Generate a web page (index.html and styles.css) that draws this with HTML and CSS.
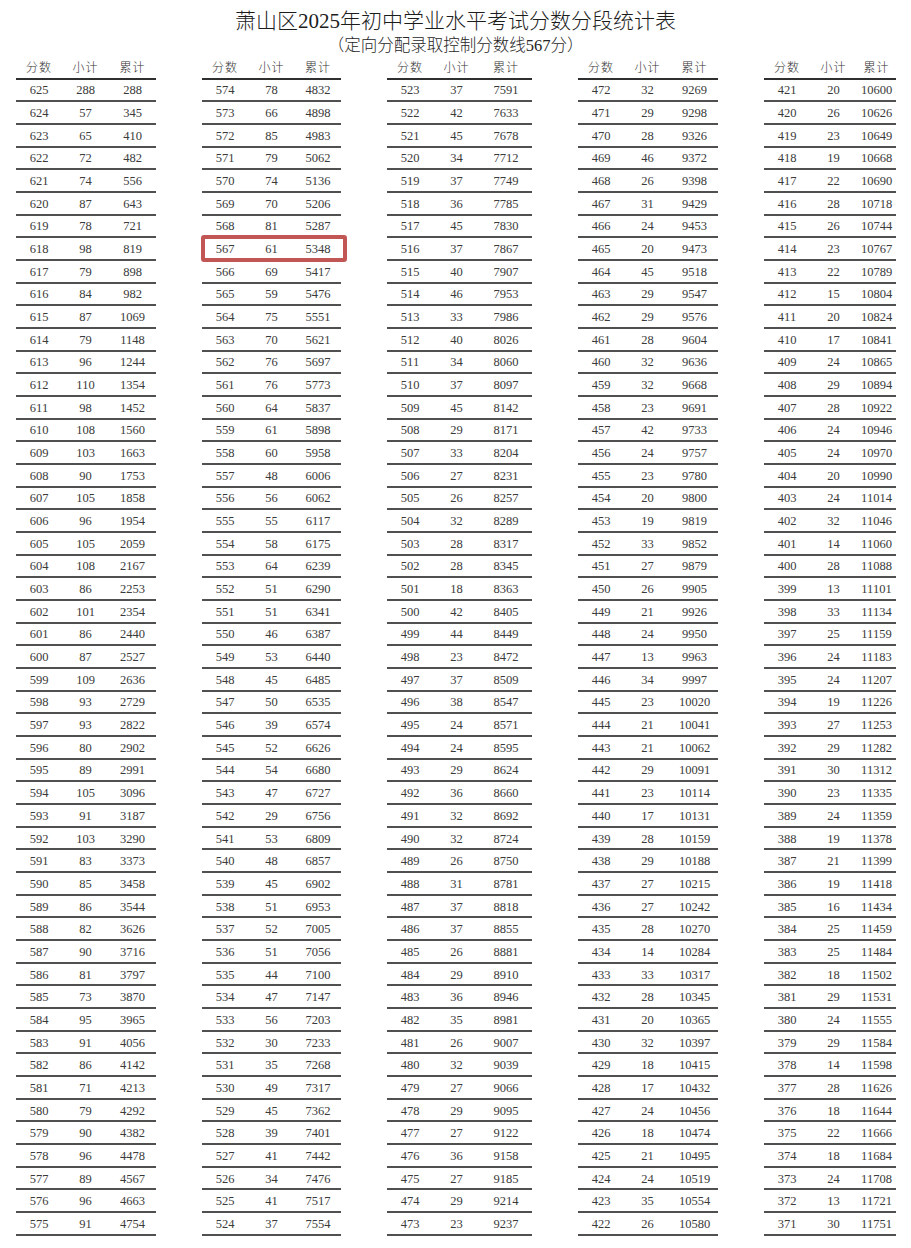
FILE: index.html
```html
<!DOCTYPE html>
<html lang="zh-CN">
<head>
<meta charset="utf-8">
<title>萧山区2025年初中学业水平考试分数分段统计表</title>
<link rel="stylesheet" href="styles.css">
</head>
<body>
<header class="head">
<h1 class="title">萧山区2025年初中学业水平考试分数分段统计表</h1>
<p class="sub">（定向分配录取控制分数线567分）</p>
</header>
<main class="cols">
<section class="tbl">
<div class="row hd"><span>分数</span><span>小计</span><span>累计</span></div>
<div class="row"><span>625</span><span>288</span><span>288</span></div>
<div class="row"><span>624</span><span>57</span><span>345</span></div>
<div class="row"><span>623</span><span>65</span><span>410</span></div>
<div class="row"><span>622</span><span>72</span><span>482</span></div>
<div class="row"><span>621</span><span>74</span><span>556</span></div>
<div class="row"><span>620</span><span>87</span><span>643</span></div>
<div class="row"><span>619</span><span>78</span><span>721</span></div>
<div class="row"><span>618</span><span>98</span><span>819</span></div>
<div class="row"><span>617</span><span>79</span><span>898</span></div>
<div class="row"><span>616</span><span>84</span><span>982</span></div>
<div class="row"><span>615</span><span>87</span><span>1069</span></div>
<div class="row"><span>614</span><span>79</span><span>1148</span></div>
<div class="row"><span>613</span><span>96</span><span>1244</span></div>
<div class="row"><span>612</span><span>110</span><span>1354</span></div>
<div class="row"><span>611</span><span>98</span><span>1452</span></div>
<div class="row"><span>610</span><span>108</span><span>1560</span></div>
<div class="row"><span>609</span><span>103</span><span>1663</span></div>
<div class="row"><span>608</span><span>90</span><span>1753</span></div>
<div class="row"><span>607</span><span>105</span><span>1858</span></div>
<div class="row"><span>606</span><span>96</span><span>1954</span></div>
<div class="row"><span>605</span><span>105</span><span>2059</span></div>
<div class="row"><span>604</span><span>108</span><span>2167</span></div>
<div class="row"><span>603</span><span>86</span><span>2253</span></div>
<div class="row"><span>602</span><span>101</span><span>2354</span></div>
<div class="row"><span>601</span><span>86</span><span>2440</span></div>
<div class="row"><span>600</span><span>87</span><span>2527</span></div>
<div class="row"><span>599</span><span>109</span><span>2636</span></div>
<div class="row"><span>598</span><span>93</span><span>2729</span></div>
<div class="row"><span>597</span><span>93</span><span>2822</span></div>
<div class="row"><span>596</span><span>80</span><span>2902</span></div>
<div class="row"><span>595</span><span>89</span><span>2991</span></div>
<div class="row"><span>594</span><span>105</span><span>3096</span></div>
<div class="row"><span>593</span><span>91</span><span>3187</span></div>
<div class="row"><span>592</span><span>103</span><span>3290</span></div>
<div class="row"><span>591</span><span>83</span><span>3373</span></div>
<div class="row"><span>590</span><span>85</span><span>3458</span></div>
<div class="row"><span>589</span><span>86</span><span>3544</span></div>
<div class="row"><span>588</span><span>82</span><span>3626</span></div>
<div class="row"><span>587</span><span>90</span><span>3716</span></div>
<div class="row"><span>586</span><span>81</span><span>3797</span></div>
<div class="row"><span>585</span><span>73</span><span>3870</span></div>
<div class="row"><span>584</span><span>95</span><span>3965</span></div>
<div class="row"><span>583</span><span>91</span><span>4056</span></div>
<div class="row"><span>582</span><span>86</span><span>4142</span></div>
<div class="row"><span>581</span><span>71</span><span>4213</span></div>
<div class="row"><span>580</span><span>79</span><span>4292</span></div>
<div class="row"><span>579</span><span>90</span><span>4382</span></div>
<div class="row"><span>578</span><span>96</span><span>4478</span></div>
<div class="row"><span>577</span><span>89</span><span>4567</span></div>
<div class="row"><span>576</span><span>96</span><span>4663</span></div>
<div class="row"><span>575</span><span>91</span><span>4754</span></div>
</section>
<section class="tbl">
<div class="row hd"><span>分数</span><span>小计</span><span>累计</span></div>
<div class="row"><span>574</span><span>78</span><span>4832</span></div>
<div class="row"><span>573</span><span>66</span><span>4898</span></div>
<div class="row"><span>572</span><span>85</span><span>4983</span></div>
<div class="row"><span>571</span><span>79</span><span>5062</span></div>
<div class="row"><span>570</span><span>74</span><span>5136</span></div>
<div class="row"><span>569</span><span>70</span><span>5206</span></div>
<div class="row"><span>568</span><span>81</span><span>5287</span></div>
<div class="row hl"><span>567</span><span>61</span><span>5348</span></div>
<div class="row"><span>566</span><span>69</span><span>5417</span></div>
<div class="row"><span>565</span><span>59</span><span>5476</span></div>
<div class="row"><span>564</span><span>75</span><span>5551</span></div>
<div class="row"><span>563</span><span>70</span><span>5621</span></div>
<div class="row"><span>562</span><span>76</span><span>5697</span></div>
<div class="row"><span>561</span><span>76</span><span>5773</span></div>
<div class="row"><span>560</span><span>64</span><span>5837</span></div>
<div class="row"><span>559</span><span>61</span><span>5898</span></div>
<div class="row"><span>558</span><span>60</span><span>5958</span></div>
<div class="row"><span>557</span><span>48</span><span>6006</span></div>
<div class="row"><span>556</span><span>56</span><span>6062</span></div>
<div class="row"><span>555</span><span>55</span><span>6117</span></div>
<div class="row"><span>554</span><span>58</span><span>6175</span></div>
<div class="row"><span>553</span><span>64</span><span>6239</span></div>
<div class="row"><span>552</span><span>51</span><span>6290</span></div>
<div class="row"><span>551</span><span>51</span><span>6341</span></div>
<div class="row"><span>550</span><span>46</span><span>6387</span></div>
<div class="row"><span>549</span><span>53</span><span>6440</span></div>
<div class="row"><span>548</span><span>45</span><span>6485</span></div>
<div class="row"><span>547</span><span>50</span><span>6535</span></div>
<div class="row"><span>546</span><span>39</span><span>6574</span></div>
<div class="row"><span>545</span><span>52</span><span>6626</span></div>
<div class="row"><span>544</span><span>54</span><span>6680</span></div>
<div class="row"><span>543</span><span>47</span><span>6727</span></div>
<div class="row"><span>542</span><span>29</span><span>6756</span></div>
<div class="row"><span>541</span><span>53</span><span>6809</span></div>
<div class="row"><span>540</span><span>48</span><span>6857</span></div>
<div class="row"><span>539</span><span>45</span><span>6902</span></div>
<div class="row"><span>538</span><span>51</span><span>6953</span></div>
<div class="row"><span>537</span><span>52</span><span>7005</span></div>
<div class="row"><span>536</span><span>51</span><span>7056</span></div>
<div class="row"><span>535</span><span>44</span><span>7100</span></div>
<div class="row"><span>534</span><span>47</span><span>7147</span></div>
<div class="row"><span>533</span><span>56</span><span>7203</span></div>
<div class="row"><span>532</span><span>30</span><span>7233</span></div>
<div class="row"><span>531</span><span>35</span><span>7268</span></div>
<div class="row"><span>530</span><span>49</span><span>7317</span></div>
<div class="row"><span>529</span><span>45</span><span>7362</span></div>
<div class="row"><span>528</span><span>39</span><span>7401</span></div>
<div class="row"><span>527</span><span>41</span><span>7442</span></div>
<div class="row"><span>526</span><span>34</span><span>7476</span></div>
<div class="row"><span>525</span><span>41</span><span>7517</span></div>
<div class="row"><span>524</span><span>37</span><span>7554</span></div>
</section>
<section class="tbl">
<div class="row hd"><span>分数</span><span>小计</span><span>累计</span></div>
<div class="row"><span>523</span><span>37</span><span>7591</span></div>
<div class="row"><span>522</span><span>42</span><span>7633</span></div>
<div class="row"><span>521</span><span>45</span><span>7678</span></div>
<div class="row"><span>520</span><span>34</span><span>7712</span></div>
<div class="row"><span>519</span><span>37</span><span>7749</span></div>
<div class="row"><span>518</span><span>36</span><span>7785</span></div>
<div class="row"><span>517</span><span>45</span><span>7830</span></div>
<div class="row"><span>516</span><span>37</span><span>7867</span></div>
<div class="row"><span>515</span><span>40</span><span>7907</span></div>
<div class="row"><span>514</span><span>46</span><span>7953</span></div>
<div class="row"><span>513</span><span>33</span><span>7986</span></div>
<div class="row"><span>512</span><span>40</span><span>8026</span></div>
<div class="row"><span>511</span><span>34</span><span>8060</span></div>
<div class="row"><span>510</span><span>37</span><span>8097</span></div>
<div class="row"><span>509</span><span>45</span><span>8142</span></div>
<div class="row"><span>508</span><span>29</span><span>8171</span></div>
<div class="row"><span>507</span><span>33</span><span>8204</span></div>
<div class="row"><span>506</span><span>27</span><span>8231</span></div>
<div class="row"><span>505</span><span>26</span><span>8257</span></div>
<div class="row"><span>504</span><span>32</span><span>8289</span></div>
<div class="row"><span>503</span><span>28</span><span>8317</span></div>
<div class="row"><span>502</span><span>28</span><span>8345</span></div>
<div class="row"><span>501</span><span>18</span><span>8363</span></div>
<div class="row"><span>500</span><span>42</span><span>8405</span></div>
<div class="row"><span>499</span><span>44</span><span>8449</span></div>
<div class="row"><span>498</span><span>23</span><span>8472</span></div>
<div class="row"><span>497</span><span>37</span><span>8509</span></div>
<div class="row"><span>496</span><span>38</span><span>8547</span></div>
<div class="row"><span>495</span><span>24</span><span>8571</span></div>
<div class="row"><span>494</span><span>24</span><span>8595</span></div>
<div class="row"><span>493</span><span>29</span><span>8624</span></div>
<div class="row"><span>492</span><span>36</span><span>8660</span></div>
<div class="row"><span>491</span><span>32</span><span>8692</span></div>
<div class="row"><span>490</span><span>32</span><span>8724</span></div>
<div class="row"><span>489</span><span>26</span><span>8750</span></div>
<div class="row"><span>488</span><span>31</span><span>8781</span></div>
<div class="row"><span>487</span><span>37</span><span>8818</span></div>
<div class="row"><span>486</span><span>37</span><span>8855</span></div>
<div class="row"><span>485</span><span>26</span><span>8881</span></div>
<div class="row"><span>484</span><span>29</span><span>8910</span></div>
<div class="row"><span>483</span><span>36</span><span>8946</span></div>
<div class="row"><span>482</span><span>35</span><span>8981</span></div>
<div class="row"><span>481</span><span>26</span><span>9007</span></div>
<div class="row"><span>480</span><span>32</span><span>9039</span></div>
<div class="row"><span>479</span><span>27</span><span>9066</span></div>
<div class="row"><span>478</span><span>29</span><span>9095</span></div>
<div class="row"><span>477</span><span>27</span><span>9122</span></div>
<div class="row"><span>476</span><span>36</span><span>9158</span></div>
<div class="row"><span>475</span><span>27</span><span>9185</span></div>
<div class="row"><span>474</span><span>29</span><span>9214</span></div>
<div class="row"><span>473</span><span>23</span><span>9237</span></div>
</section>
<section class="tbl">
<div class="row hd"><span>分数</span><span>小计</span><span>累计</span></div>
<div class="row"><span>472</span><span>32</span><span>9269</span></div>
<div class="row"><span>471</span><span>29</span><span>9298</span></div>
<div class="row"><span>470</span><span>28</span><span>9326</span></div>
<div class="row"><span>469</span><span>46</span><span>9372</span></div>
<div class="row"><span>468</span><span>26</span><span>9398</span></div>
<div class="row"><span>467</span><span>31</span><span>9429</span></div>
<div class="row"><span>466</span><span>24</span><span>9453</span></div>
<div class="row"><span>465</span><span>20</span><span>9473</span></div>
<div class="row"><span>464</span><span>45</span><span>9518</span></div>
<div class="row"><span>463</span><span>29</span><span>9547</span></div>
<div class="row"><span>462</span><span>29</span><span>9576</span></div>
<div class="row"><span>461</span><span>28</span><span>9604</span></div>
<div class="row"><span>460</span><span>32</span><span>9636</span></div>
<div class="row"><span>459</span><span>32</span><span>9668</span></div>
<div class="row"><span>458</span><span>23</span><span>9691</span></div>
<div class="row"><span>457</span><span>42</span><span>9733</span></div>
<div class="row"><span>456</span><span>24</span><span>9757</span></div>
<div class="row"><span>455</span><span>23</span><span>9780</span></div>
<div class="row"><span>454</span><span>20</span><span>9800</span></div>
<div class="row"><span>453</span><span>19</span><span>9819</span></div>
<div class="row"><span>452</span><span>33</span><span>9852</span></div>
<div class="row"><span>451</span><span>27</span><span>9879</span></div>
<div class="row"><span>450</span><span>26</span><span>9905</span></div>
<div class="row"><span>449</span><span>21</span><span>9926</span></div>
<div class="row"><span>448</span><span>24</span><span>9950</span></div>
<div class="row"><span>447</span><span>13</span><span>9963</span></div>
<div class="row"><span>446</span><span>34</span><span>9997</span></div>
<div class="row"><span>445</span><span>23</span><span>10020</span></div>
<div class="row"><span>444</span><span>21</span><span>10041</span></div>
<div class="row"><span>443</span><span>21</span><span>10062</span></div>
<div class="row"><span>442</span><span>29</span><span>10091</span></div>
<div class="row"><span>441</span><span>23</span><span>10114</span></div>
<div class="row"><span>440</span><span>17</span><span>10131</span></div>
<div class="row"><span>439</span><span>28</span><span>10159</span></div>
<div class="row"><span>438</span><span>29</span><span>10188</span></div>
<div class="row"><span>437</span><span>27</span><span>10215</span></div>
<div class="row"><span>436</span><span>27</span><span>10242</span></div>
<div class="row"><span>435</span><span>28</span><span>10270</span></div>
<div class="row"><span>434</span><span>14</span><span>10284</span></div>
<div class="row"><span>433</span><span>33</span><span>10317</span></div>
<div class="row"><span>432</span><span>28</span><span>10345</span></div>
<div class="row"><span>431</span><span>20</span><span>10365</span></div>
<div class="row"><span>430</span><span>32</span><span>10397</span></div>
<div class="row"><span>429</span><span>18</span><span>10415</span></div>
<div class="row"><span>428</span><span>17</span><span>10432</span></div>
<div class="row"><span>427</span><span>24</span><span>10456</span></div>
<div class="row"><span>426</span><span>18</span><span>10474</span></div>
<div class="row"><span>425</span><span>21</span><span>10495</span></div>
<div class="row"><span>424</span><span>24</span><span>10519</span></div>
<div class="row"><span>423</span><span>35</span><span>10554</span></div>
<div class="row"><span>422</span><span>26</span><span>10580</span></div>
</section>
<section class="tbl">
<div class="row hd"><span>分数</span><span>小计</span><span>累计</span></div>
<div class="row"><span>421</span><span>20</span><span>10600</span></div>
<div class="row"><span>420</span><span>26</span><span>10626</span></div>
<div class="row"><span>419</span><span>23</span><span>10649</span></div>
<div class="row"><span>418</span><span>19</span><span>10668</span></div>
<div class="row"><span>417</span><span>22</span><span>10690</span></div>
<div class="row"><span>416</span><span>28</span><span>10718</span></div>
<div class="row"><span>415</span><span>26</span><span>10744</span></div>
<div class="row"><span>414</span><span>23</span><span>10767</span></div>
<div class="row"><span>413</span><span>22</span><span>10789</span></div>
<div class="row"><span>412</span><span>15</span><span>10804</span></div>
<div class="row"><span>411</span><span>20</span><span>10824</span></div>
<div class="row"><span>410</span><span>17</span><span>10841</span></div>
<div class="row"><span>409</span><span>24</span><span>10865</span></div>
<div class="row"><span>408</span><span>29</span><span>10894</span></div>
<div class="row"><span>407</span><span>28</span><span>10922</span></div>
<div class="row"><span>406</span><span>24</span><span>10946</span></div>
<div class="row"><span>405</span><span>24</span><span>10970</span></div>
<div class="row"><span>404</span><span>20</span><span>10990</span></div>
<div class="row"><span>403</span><span>24</span><span>11014</span></div>
<div class="row"><span>402</span><span>32</span><span>11046</span></div>
<div class="row"><span>401</span><span>14</span><span>11060</span></div>
<div class="row"><span>400</span><span>28</span><span>11088</span></div>
<div class="row"><span>399</span><span>13</span><span>11101</span></div>
<div class="row"><span>398</span><span>33</span><span>11134</span></div>
<div class="row"><span>397</span><span>25</span><span>11159</span></div>
<div class="row"><span>396</span><span>24</span><span>11183</span></div>
<div class="row"><span>395</span><span>24</span><span>11207</span></div>
<div class="row"><span>394</span><span>19</span><span>11226</span></div>
<div class="row"><span>393</span><span>27</span><span>11253</span></div>
<div class="row"><span>392</span><span>29</span><span>11282</span></div>
<div class="row"><span>391</span><span>30</span><span>11312</span></div>
<div class="row"><span>390</span><span>23</span><span>11335</span></div>
<div class="row"><span>389</span><span>24</span><span>11359</span></div>
<div class="row"><span>388</span><span>19</span><span>11378</span></div>
<div class="row"><span>387</span><span>21</span><span>11399</span></div>
<div class="row"><span>386</span><span>19</span><span>11418</span></div>
<div class="row"><span>385</span><span>16</span><span>11434</span></div>
<div class="row"><span>384</span><span>25</span><span>11459</span></div>
<div class="row"><span>383</span><span>25</span><span>11484</span></div>
<div class="row"><span>382</span><span>18</span><span>11502</span></div>
<div class="row"><span>381</span><span>29</span><span>11531</span></div>
<div class="row"><span>380</span><span>24</span><span>11555</span></div>
<div class="row"><span>379</span><span>29</span><span>11584</span></div>
<div class="row"><span>378</span><span>14</span><span>11598</span></div>
<div class="row"><span>377</span><span>28</span><span>11626</span></div>
<div class="row"><span>376</span><span>18</span><span>11644</span></div>
<div class="row"><span>375</span><span>22</span><span>11666</span></div>
<div class="row"><span>374</span><span>18</span><span>11684</span></div>
<div class="row"><span>373</span><span>24</span><span>11708</span></div>
<div class="row"><span>372</span><span>13</span><span>11721</span></div>
<div class="row"><span>371</span><span>30</span><span>11751</span></div>
</section>
</main>
</body>
</html>
```
FILE: styles.css
```css
html, body {
  margin: 0;
  padding: 0;
  background: #ffffff;
}

body {
  width: 911px;
  color: #3a3a3a;
  font-family: "Liberation Serif", "Noto Sans CJK SC", serif;
}

.head {
  height: 56px;
  box-sizing: border-box;
  padding-top: 8px;
  display: flex;
  flex-direction: column;
  align-items: center;
}

.title {
  margin: 0;
  font-size: 21px;
  line-height: 26px;
  font-weight: 300;
  color: #1c1c1c;
}

.sub {
  margin: 0;
  padding-top: 1px;
  font-size: 16.5px;
  line-height: 22px;
  font-weight: 300;
  color: #262626;
}

.cols {
  display: grid;
  grid-template-columns: 140px 139px 145px 140px 132px;
  column-gap: 46px;
  padding-left: 16px;
}

.tbl {
  display: flex;
  flex-direction: column;
}

.row {
  position: relative;
  display: grid;
  grid-template-columns: 46px 47px 1fr;
  align-items: center;
  box-sizing: border-box;
  height: 22.68px;
  padding-top: 1px;
  border-bottom: 2px solid #505050;
  text-align: center;
  font-size: 12.5px;
  line-height: 14px;
}

.hd {
  height: 23.5px;
  padding-top: 0;
  border-bottom-color: #2f2f2f;
  font-family: "Noto Sans CJK SC", sans-serif;
  font-size: 12px;
  font-weight: 300;
  letter-spacing: 1px;
  color: #333333;
}

.hl::after {
  content: "";
  position: absolute;
  left: -1px;
  right: -6px;
  top: -3px;
  bottom: -3px;
  border: 4px solid #c25654;
  border-radius: 3px;
}
```
